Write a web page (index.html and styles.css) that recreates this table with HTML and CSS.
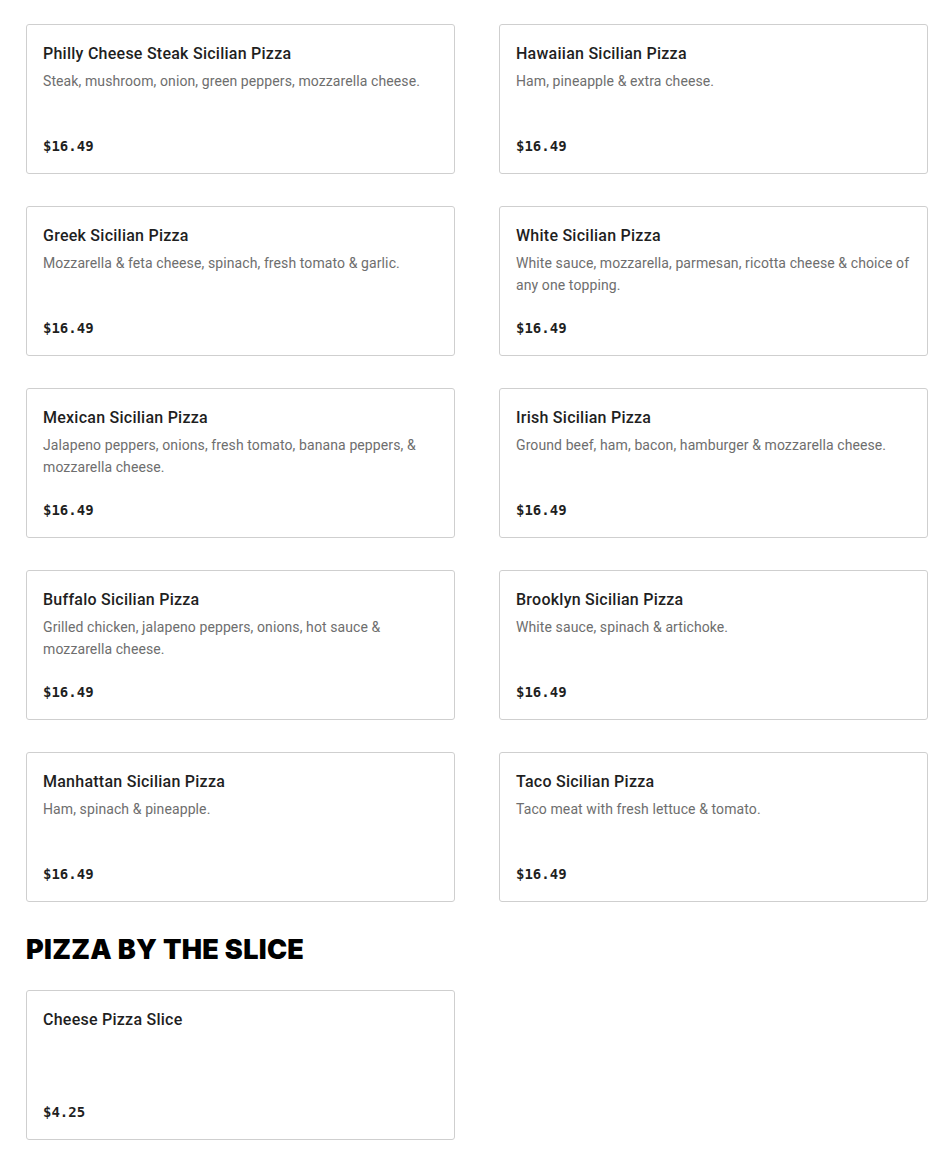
FILE: index.html
```html
<!DOCTYPE html>
<html lang="en">
<head>
<meta charset="utf-8">
<title>Menu</title>
<link rel="stylesheet" href="styles.css">
</head>
<body>
<main class="menu">
  <section class="grid">
    <article class="card"><h3 class="name">Philly Cheese Steak Sicilian Pizza</h3><p class="desc">Steak, mushroom, onion, green peppers, mozzarella cheese.</p><div class="price">$16.49</div></article>
    <article class="card"><h3 class="name">Hawaiian Sicilian Pizza</h3><p class="desc">Ham, pineapple &amp; extra cheese.</p><div class="price">$16.49</div></article>
    <article class="card"><h3 class="name">Greek Sicilian Pizza</h3><p class="desc">Mozzarella &amp; feta cheese, spinach, fresh tomato &amp; garlic.</p><div class="price">$16.49</div></article>
    <article class="card"><h3 class="name">White Sicilian Pizza</h3><p class="desc">White sauce, mozzarella, parmesan, ricotta cheese &amp; choice of any one topping.</p><div class="price">$16.49</div></article>
    <article class="card"><h3 class="name">Mexican Sicilian Pizza</h3><p class="desc">Jalapeno peppers, onions, fresh tomato, banana peppers, &amp; mozzarella cheese.</p><div class="price">$16.49</div></article>
    <article class="card"><h3 class="name">Irish Sicilian Pizza</h3><p class="desc">Ground beef, ham, bacon, hamburger &amp; mozzarella cheese.</p><div class="price">$16.49</div></article>
    <article class="card"><h3 class="name">Buffalo Sicilian Pizza</h3><p class="desc">Grilled chicken, jalapeno peppers, onions, hot sauce &amp; mozzarella cheese.</p><div class="price">$16.49</div></article>
    <article class="card"><h3 class="name">Brooklyn Sicilian Pizza</h3><p class="desc">White sauce, spinach &amp; artichoke.</p><div class="price">$16.49</div></article>
    <article class="card"><h3 class="name">Manhattan Sicilian Pizza</h3><p class="desc">Ham, spinach &amp; pineapple.</p><div class="price">$16.49</div></article>
    <article class="card"><h3 class="name">Taco Sicilian Pizza</h3><p class="desc">Taco meat with fresh lettuce &amp; tomato.</p><div class="price">$16.49</div></article>
  </section>
  <h2 class="section-title">PIZZA BY THE SLICE</h2>
  <section class="grid">
    <article class="card"><h3 class="name">Cheese Pizza Slice</h3><div class="price">$4.25</div></article>
  </section>
</main>
</body>
</html>
```
FILE: styles.css
```css
html, body {
  margin: 0;
  padding: 0;
  background: #ffffff;
}
body {
  font-family: Roboto, "Liberation Sans", sans-serif;
  color: #1f1f1f;
}
.menu {
  padding: 24px 22px 24px 26px;
}
.grid {
  display: grid;
  grid-template-columns: 429px 429px;
  column-gap: 44px;
  row-gap: 32px;
}
.card {
  box-sizing: border-box;
  height: 150px;
  border: 1px solid #cfcfcf;
  border-radius: 3px;
  padding: 17px 16px 16px;
  display: flex;
  flex-direction: column;
}
.name {
  margin: 0;
  font-size: 16px;
  line-height: 24px;
  font-weight: 500;
  letter-spacing: 0.25px;
  color: #1f1f1f;
}
.desc {
  margin: 4px 0 0;
  font-size: 14px;
  line-height: 22px;
  letter-spacing: 0.1px;
  color: #6e6e6e;
}
.price {
  margin-top: auto;
  font-family: "DejaVu Sans Mono", monospace;
  font-size: 14px;
  line-height: 22px;
  font-weight: 700;
  color: #1f1f1f;
}
.section-title {
  margin: 32px 0 24px;
  font-family: Inter, "Liberation Sans", sans-serif;
  font-size: 27px;
  line-height: 32px;
  font-weight: 900;
  color: #000;
  letter-spacing: 0.3px;
}
```
